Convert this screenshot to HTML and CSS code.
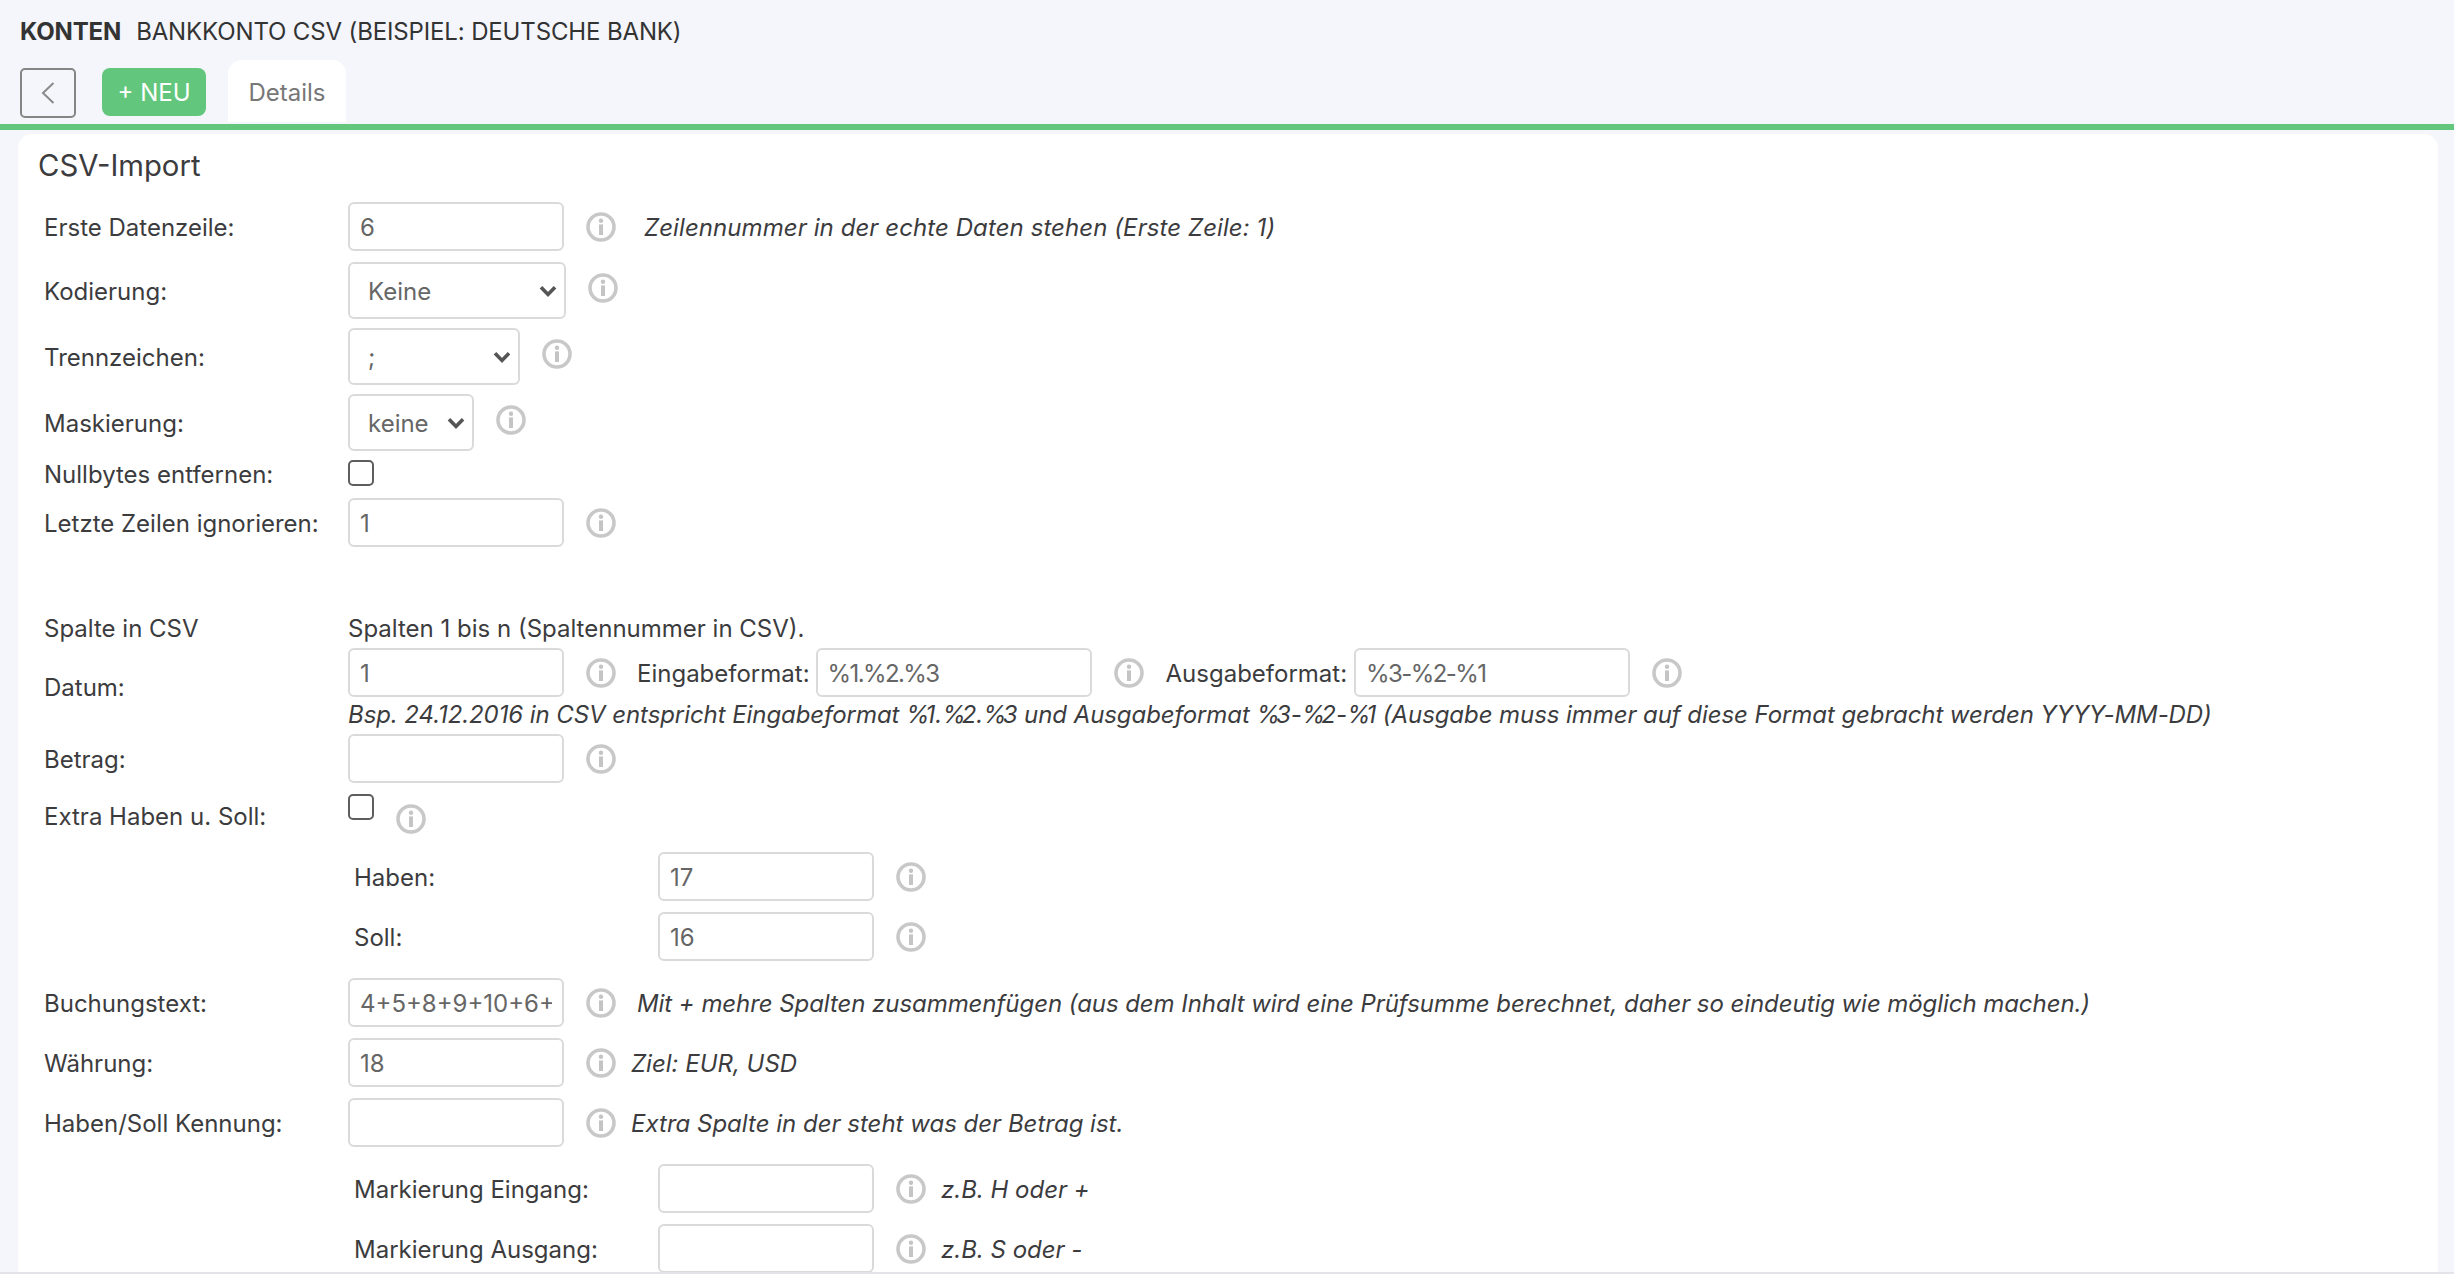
FILE: index.html
```html
<!DOCTYPE html>
<html lang="de">
<head>
<meta charset="utf-8">
<title>Konten</title>
<link rel="stylesheet" href="styles.css">
</head>
<body>
<svg class="defs" aria-hidden="true">
  <symbol id="info" viewBox="0 0 30 30">
    <circle cx="15" cy="15" r="13" fill="none" stroke="#c8c8c8" stroke-width="3.6"/>
    <circle cx="15" cy="8.8" r="2.2" fill="#c4c4c4"/>
    <rect x="13" y="12.4" width="4" height="10.6" fill="#c4c4c4"/>
  </symbol>
  <symbol id="chev" viewBox="0 0 18 12">
    <path d="M2 2.2 9 9.4 16 2.2" fill="none" stroke="#555" stroke-width="3.6"/>
  </symbol>
</svg>
<header class="top">
  <h1 class="title"><b>KONTEN</b><span>BANKKONTO CSV (BEISPIEL: DEUTSCHE BANK)</span></h1>
  <nav class="nav">
    <button class="back" type="button" aria-label="Zurück">
      <svg width="14" height="22" viewBox="0 0 14 22"><path d="M12.5 1 2 11l10.5 10" fill="none" stroke="#8a8a8a" stroke-width="2"/></svg>
    </button>
    <button class="new" type="button">+ NEU</button>
    <a class="tab">Details</a>
  </nav>
</header>
<main class="card">
  <h2 class="card-title">CSV-Import</h2>

  <div class="row r1"><label>Erste Datenzeile:</label><input class="inp" value="6"><svg class="i"><use href="#info"/></svg><em class="note n28 wide">Zeilennummer in der echte Daten stehen (Erste Zeile: 1)</em></div>
  <div class="row g11"><label>Kodierung:</label><span class="sel w218"><select><option>Keine</option></select><svg class="chev"><use href="#chev"/></svg></span><svg class="i up"><use href="#info"/></svg></div>
  <div class="row g9"><label>Trennzeichen:</label><span class="sel w172"><select><option>;</option></select><svg class="chev"><use href="#chev"/></svg></span><svg class="i up"><use href="#info"/></svg></div>
  <div class="row g9"><label>Maskierung:</label><span class="sel w126"><select><option>keine</option></select><svg class="chev"><use href="#chev"/></svg></span><svg class="i up"><use href="#info"/></svg></div>
  <div class="row g9 h26"><label>Nullbytes entfernen:</label><input class="chk" type="checkbox"></div>
  <div class="row g12"><label>Letzte Zeilen ignorieren:</label><input class="inp" value="1"><svg class="i"><use href="#info"/></svg></div>

  <div class="row spalte"><label>Spalte in CSV</label><span>Spalten 1 bis n (Spaltennummer in CSV).</span></div>
  <div class="row g4"><label class="low">Datum:</label><input class="inp" value="1"><svg class="i"><use href="#info"/></svg><span class="lab-in">Eingabeformat:</span><input class="inp fmt" value="%1.%2.%3"><svg class="i"><use href="#info"/></svg><span class="lab-in lab-wide">Ausgabeformat:</span><input class="inp fmt" value="%3-%2-%1"><svg class="i"><use href="#info"/></svg></div>
  <div class="row hint"><label></label><em>Bsp. 24.12.2016 in CSV entspricht Eingabeformat <span class="pct">%</span>1.<span class="pct">%</span>2.<span class="pct">%</span>3 und Ausgabeformat <span class="pct">%</span>3-<span class="pct">%</span>2-<span class="pct">%</span>1 (Ausgabe muss immer auf diese Format gebracht werden YYYY-MM-DD)</em></div>
  <div class="row g6"><label>Betrag:</label><input class="inp"><svg class="i"><use href="#info"/></svg></div>
  <div class="row g11 h26"><label class="low2">Extra Haben u. Soll:</label><input class="chk" type="checkbox"><svg class="i near"><use href="#info"/></svg></div>

  <div class="row sub g32"><label>Haben:</label><input class="inp" value="17"><svg class="i"><use href="#info"/></svg></div>
  <div class="row sub g11"><label>Soll:</label><input class="inp" value="16"><svg class="i"><use href="#info"/></svg></div>

  <div class="row g17"><label>Buchungstext:</label><input class="inp" value="4+5+8+9+10+6+"><svg class="i"><use href="#info"/></svg><em class="note n21 tight">Mit + mehre Spalten zusammenfügen (aus dem Inhalt wird eine Prüfsumme berechnet, daher so eindeutig wie möglich machen.)</em></div>
  <div class="row g11"><label>Währung:</label><input class="inp" value="18"><svg class="i"><use href="#info"/></svg><em class="note n15">Ziel: EUR, USD</em></div>
  <div class="row g11"><label>Haben/Soll Kennung:</label><input class="inp"><svg class="i"><use href="#info"/></svg><em class="note n15">Extra Spalte in der steht was der Betrag ist.</em></div>

  <div class="row sub g17"><label>Markierung Eingang:</label><input class="inp"><svg class="i"><use href="#info"/></svg><em class="note n15">z.B. H oder +</em></div>
  <div class="row sub g11"><label>Markierung Ausgang:</label><input class="inp"><svg class="i"><use href="#info"/></svg><em class="note n15">z.B. S oder -</em></div>
</main>
<div class="edge"></div>
</body>
</html>
```
FILE: styles.css
```css
* { box-sizing: border-box; }
html, body { margin: 0; height: 100%; overflow: hidden; }
body {
  background: #f4f6fb;
  color: #3c3c3e;
  font: 24px/30px Inter, "Liberation Sans", sans-serif;
}
.defs { position: absolute; width: 0; height: 0; }

.top { height: 130px; padding: 17px 0 0 20px; border-bottom: 6px solid #62c77c; }
.title { margin: 0; display: flex; gap: 15px; font-size: 24px; font-weight: 400; line-height: 30px; color: #333; letter-spacing: -0.14px; }
.title b { font-weight: 700; }
.nav { display: flex; align-items: flex-start; margin-top: 13px; }
.back {
  width: 56px; height: 50px; margin-top: 8px; padding: 0;
  display: flex; align-items: center; justify-content: center;
  background: transparent; border: 2px solid #858585; border-radius: 5px;
}
.new {
  width: 104px; height: 48px; margin: 8px 0 0 26px; padding: 1px 0 0;
  background: #62c77c; color: #fff; border: 0; border-radius: 8px;
  font: 24px/47px Inter, "Liberation Sans", sans-serif;
}
.tab {
  width: 118px; height: 62px; margin-left: 22px;
  background: #fff; color: #777; border-radius: 14px 14px 0 0;
  text-align: center; line-height: 66px;
}

.card {
  margin: 4px 16px 0 18px; height: 1200px; padding: 0 20px;
  background: #fff; border-radius: 14px 14px 0 0;
}
.card-title { margin: 0; padding-top: 14px; height: 68px; font-size: 29.3px; line-height: 36px; font-weight: 400; color: #3c3c3e; }

.row { display: flex; align-items: center; padding-left: 6px; }
.row > label { flex: 0 0 304px; padding-top: 3px; }
.row > span:not(.sel), .row > em { padding-top: 3px; }
.row.sub { padding-left: 316px; }
.g4 { margin-top: 4px; }
.g6 { margin-top: 6px; }
.g9 { margin-top: 9px; }
.g11 { margin-top: 11px; }
.g12 { margin-top: 12px; }
.g17 { margin-top: 17px; }
.g32 { margin-top: 32px; }
.h26 { height: 26px; }
.spalte { margin-top: 64px; }
.hint { height: 30px; margin-top: 1px; letter-spacing: -0.075px; }
.low { position: relative; top: 14px; }
.low2 { position: relative; top: 8px; }
.pct { letter-spacing: -4px; }

.inp {
  width: 216px; height: 49px; padding: 2px 10px 0;
  border: 2px solid #dadada; border-radius: 6px;
  background: #fff; color: #666; outline: 0;
  font: 24px Inter, "Liberation Sans", sans-serif;
}
.fmt { width: 276px; letter-spacing: -1.6px; }
.lab-in { margin-left: 21px; margin-right: 6px; }
.lab-wide { margin-left: 22px; margin-right: 7px; }
.sel { position: relative; display: block; height: 57px; }
.sel select {
  appearance: none; width: 100%; height: 100%; padding: 2px 0 0 18px;
  border: 2px solid #dadada; border-radius: 6px;
  background: #fff; color: #666; outline: 0;
  font: 24px Inter, "Liberation Sans", sans-serif;
}
.chev { position: absolute; right: 9px; top: 23px; width: 18px; height: 12px; pointer-events: none; }
.w218 { width: 218px; }
.w172 { width: 172px; }
.w126 { width: 126px; }

.i { flex: none; width: 30px; height: 30px; margin-left: 22px; }
.up { position: relative; top: -3px; }
.near { position: relative; top: 12px; }

.chk {
  appearance: none; flex: none; width: 26px; height: 26px; margin: 0;
  border: 2px solid #5e5e5e; border-radius: 5px; background: #fff;
}
.note { white-space: nowrap; }
.wide { letter-spacing: 0.08px; }
.tight { letter-spacing: -0.065px; }
.n28 { margin-left: 28px; }
.n21 { margin-left: 21px; }
.n15 { margin-left: 15px; }

.edge { position: fixed; left: 0; right: 0; bottom: 0; height: 2px; background: #e2e4ea; }
```
